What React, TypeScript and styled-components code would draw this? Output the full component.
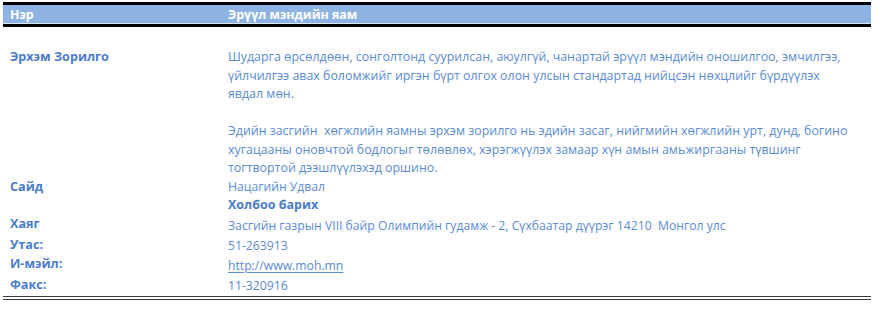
import * as React from "react";
import styled, { createGlobalStyle } from "styled-components";

const GlobalStyle = createGlobalStyle`
    html, body {
        margin: 0;
        padding: 0;
        background: #fff;
    }
    body {
        font-family: "Open Sans", "Noto Sans", "DejaVu Sans", sans-serif;
    }
`;

const LabelColor = "#4a7ccc";
const TextColor = "#5b8bd4";

const Sheet = styled.div`
    width: 868px;
    padding: 2px 0 0 3px;
`;

const HeaderRow = styled.div`
    display: grid;
    grid-template-columns: 225px 1fr;
    height: 19px;
    align-items: center;
    background: #8db3e2;
    border-top: 3px solid #000;
    border-bottom: 3px solid #000;
    box-shadow: inset 0 -1px 0 #dce6f2;
    color: #fff;
    font-size: 12.4px;
    font-weight: 700;
    & > span:first-child{
        padding-left: 7px;
    }
`;

const Body = styled.div`
    padding-top: 21px;
    border-bottom: 4px double #3a3a3a;
`;

const Row = styled.div<{h:number}>`
    display: grid;
    grid-template-columns: 225px 1fr;
    height: ${props=>props.h}px;
    align-items: center;
    white-space: pre;
`;

const Label = styled.div`
    padding-left: 7px;
    color: ${LabelColor};
    font-size: 12.6px;
    font-weight: 700;
    align-self: start;
    line-height: inherit;
`;

const Value = styled.div<{bold?:boolean}>`
    color: ${props=> props.bold ? LabelColor : TextColor};
    font-size: ${props=> props.bold ? "12.5px" : "12.2px"};
    font-weight: ${props=> props.bold ? 700 : 400};
`;

const Mission = styled.div`
    display: grid;
    grid-template-columns: 225px 1fr;
    line-height: 18.5px;
    white-space: nowrap;
`;

const Paragraph = styled.p`
    margin: 0 0 18.5px;
    color: ${TextColor};
    font-size: 12.4px;
    &:last-child{
        margin-bottom: 0;
    }
`;

const Link = styled.a`
    color: ${TextColor};
    text-decoration: underline;
    text-underline-offset: 2px;
`;

type Contact = { label:string, value:React.ReactNode, h:number };

const contacts:Contact[] = [
    { label:"Хаяг", value:"Засгийн газрын VIII байр Олимпийн гудамж - 2, Сүхбаатар дүүрэг 14210  Монгол улс", h:21 },
    { label:"Утас:", value:"51-263913", h:19 },
    { label:"И-мэйл:", value:<Link href="#">http://www.moh.mn</Link>, h:21 },
    { label:"Факс:", value:"11-320916", h:20 },
];

export default function App(){
    return(
        <Sheet>
            <GlobalStyle />
            <HeaderRow>
                <span>Нэр</span>
                <span>Эрүүл мэндийн яам</span>
            </HeaderRow>
            <Body>
                <Mission>
                    <Label>Эрхэм Зорилго</Label>
                    <div>
                        <Paragraph>
                            Шударга өрсөлдөөн, сонголтонд суурилсан, аюулгүй, чанартай эрүүл мэндийн оношилгоо, эмчилгээ,<br />
                            үйлчилгээ авах боломжийг иргэн бүрт олгох олон улсын стандартад нийцсэн нөхцлийг бүрдүүлэх<br />
                            явдал мөн.
                        </Paragraph>
                        <Paragraph>
                            Эдийн засгийн&nbsp; хөгжлийн яамны эрхэм зорилго нь эдийн засаг, нийгмийн хөгжлийн урт, дунд, богино<br />
                            хугацааны оновчтой бодлогыг төлөвлөх, хэрэгжүүлэх замаар хүн амын амьжиргааны түвшинг<br />
                            тогтвортой дээшлүүлэхэд оршино.
                        </Paragraph>
                    </div>
                </Mission>
                <Row h={16}>
                    <Label>Сайд</Label>
                    <Value>Нацагийн Удвал</Value>
                </Row>
                <Row h={21}>
                    <span />
                    <Value bold>Холбоо барих</Value>
                </Row>
                {contacts.map(c=>(
                    <Row key={c.label} h={c.h}>
                        <Label>{c.label}</Label>
                        <Value>{c.value}</Value>
                    </Row>
                ))}
            </Body>
        </Sheet>
    )
}
